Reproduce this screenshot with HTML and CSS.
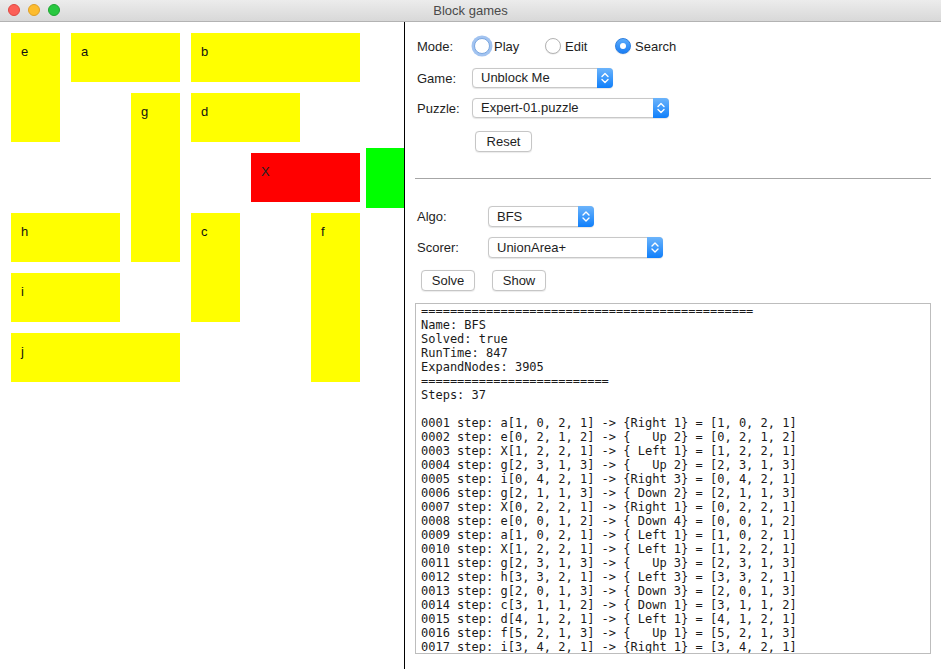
FILE: index.html
```html
<!DOCTYPE html>
<html>
<head>
<meta charset="utf-8">
<title>Block games</title>
<link rel="stylesheet" href="styles.css">
</head>
<body>
<div class="window">
  <div class="titlebar">
    <div class="lights">
      <span class="light red"></span>
      <span class="light yellow"></span>
      <span class="light green"></span>
    </div>
    <div class="title">Block games</div>
    <div></div>
  </div>
  <div class="main">
    <div class="board-pane">
      <div class="board">
        <div class="block b-e">e</div>
        <div class="block b-a">a</div>
        <div class="block b-b">b</div>
        <div class="block b-g">g</div>
        <div class="block b-d">d</div>
        <div class="block red-block b-x">X</div>
        <div class="block b-h">h</div>
        <div class="block b-c">c</div>
        <div class="block b-f">f</div>
        <div class="block b-i">i</div>
        <div class="block b-j">j</div>
      </div>
      <div class="exit"></div>
    </div>
    <div class="side">
      <div class="row mode-row">
        <span class="label lw-mode">Mode:</span>
        <span class="opt"><span class="radio focus"></span><span>Play</span></span>
        <span class="opt"><span class="radio"></span><span>Edit</span></span>
        <span class="opt"><span class="radio checked"></span><span>Search</span></span>
      </div>
      <div class="row game-row">
        <span class="label lw-game">Game:</span>
        <div class="select w-game"><span class="sel-text">Unblock Me</span><span class="sel-arrow"><svg width="16" height="20" viewBox="0 0 16 20"><path d="M5 8.5 L8 5.5 L11 8.5 M5 11.5 L8 14.5 L11 11.5" fill="none" stroke="#fff" stroke-width="1.4" stroke-linecap="round" stroke-linejoin="round"/></svg></span></div>
      </div>
      <div class="row puzzle-row">
        <span class="label lw-game">Puzzle:</span>
        <div class="select w-puzzle"><span class="sel-text">Expert-01.puzzle</span><span class="sel-arrow"><svg width="16" height="20" viewBox="0 0 16 20"><path d="M5 8.5 L8 5.5 L11 8.5 M5 11.5 L8 14.5 L11 11.5" fill="none" stroke="#fff" stroke-width="1.4" stroke-linecap="round" stroke-linejoin="round"/></svg></span></div>
      </div>
      <div class="row reset-row">
        <button class="btn w-reset">Reset</button>
      </div>
      <div class="sep"></div>
      <div class="row algo-row">
        <span class="label lw-algo">Algo:</span>
        <div class="select tall w-algo"><span class="sel-text">BFS</span><span class="sel-arrow"><svg width="16" height="21" viewBox="0 0 16 21"><path d="M5 9 L8 6 L11 9 M5 12 L8 15 L11 12" fill="none" stroke="#fff" stroke-width="1.4" stroke-linecap="round" stroke-linejoin="round"/></svg></span></div>
      </div>
      <div class="row scorer-row">
        <span class="label lw-algo">Scorer:</span>
        <div class="select tall w-scorer"><span class="sel-text">UnionArea+</span><span class="sel-arrow"><svg width="16" height="21" viewBox="0 0 16 21"><path d="M5 9 L8 6 L11 9 M5 12 L8 15 L11 12" fill="none" stroke="#fff" stroke-width="1.4" stroke-linecap="round" stroke-linejoin="round"/></svg></span></div>
      </div>
      <div class="row btn-row">
        <button class="btn w-solve">Solve</button>
        <button class="btn w-show">Show</button>
      </div>
      <div class="output"><pre>==============================================
Name: BFS
Solved: true
RunTime: 847
ExpandNodes: 3905
==========================
Steps: 37

0001 step: a[1, 0, 2, 1] -&gt; {Right 1} = [1, 0, 2, 1]
0002 step: e[0, 2, 1, 2] -&gt; {   Up 2} = [0, 2, 1, 2]
0003 step: X[1, 2, 2, 1] -&gt; { Left 1} = [1, 2, 2, 1]
0004 step: g[2, 3, 1, 3] -&gt; {   Up 2} = [2, 3, 1, 3]
0005 step: i[0, 4, 2, 1] -&gt; {Right 3} = [0, 4, 2, 1]
0006 step: g[2, 1, 1, 3] -&gt; { Down 2} = [2, 1, 1, 3]
0007 step: X[0, 2, 2, 1] -&gt; {Right 1} = [0, 2, 2, 1]
0008 step: e[0, 0, 1, 2] -&gt; { Down 4} = [0, 0, 1, 2]
0009 step: a[1, 0, 2, 1] -&gt; { Left 1} = [1, 0, 2, 1]
0010 step: X[1, 2, 2, 1] -&gt; { Left 1} = [1, 2, 2, 1]
0011 step: g[2, 3, 1, 3] -&gt; {   Up 3} = [2, 3, 1, 3]
0012 step: h[3, 3, 2, 1] -&gt; { Left 3} = [3, 3, 2, 1]
0013 step: g[2, 0, 1, 3] -&gt; { Down 3} = [2, 0, 1, 3]
0014 step: c[3, 1, 1, 2] -&gt; { Down 1} = [3, 1, 1, 2]
0015 step: d[4, 1, 2, 1] -&gt; { Left 1} = [4, 1, 2, 1]
0016 step: f[5, 2, 1, 3] -&gt; {   Up 1} = [5, 2, 1, 3]
0017 step: i[3, 4, 2, 1] -&gt; {Right 1} = [3, 4, 2, 1]</pre></div>
    </div>
  </div>
</div>
</body>
</html>
```
FILE: styles.css
```css
html, body {
  margin: 0;
  padding: 0;
  background: #fff;
}
body {
  width: 941px;
  height: 669px;
  overflow: hidden;
  font-family: "Liberation Sans", Arial, sans-serif;
  font-size: 13px;
  color: #1e1e1e;
}
.window {
  display: flex;
  flex-direction: column;
  width: 941px;
  height: 669px;
}
.titlebar {
  height: 21px;
  border-bottom: 1px solid #b3b3b3;
  background: linear-gradient(#ececec, #d8d8d8);
  display: grid;
  grid-template-columns: 1fr auto 1fr;
  align-items: center;
  flex: none;
}
.lights {
  display: flex;
  gap: 8px;
  padding-left: 8px;
  align-items: center;
  margin-top: -1px;
}
.light {
  width: 12px;
  height: 12px;
  border-radius: 50%;
  box-sizing: border-box;
}
.light.red { background: #fc5f57; border: 1px solid #df4841; }
.light.yellow { background: #fdbc2e; border: 1px solid #de9f26; }
.light.green { background: #28c840; border: 1px solid #1ea532; }
.title {
  color: #4a4a4a;
  font-size: 13px;
  line-height: 21px;
}
.main {
  display: flex;
  flex: 1;
  min-height: 0;
}
.board-pane {
  width: 405px;
  box-sizing: border-box;
  border-right: 1px solid #000;
  padding: 11px 0 0 11px;
  position: relative;
  overflow: hidden;
  flex: none;
}
.board {
  display: grid;
  grid-template-columns: repeat(6, 49px);
  grid-template-rows: repeat(6, 49px);
  gap: 11px;
}
.block {
  background: #ffff00;
  padding: 11px 0 0 10px;
  line-height: 15px;
  font-size: 13px;
  color: #111;
}
.red-block { background: #ff0000; color: #222; }
.b-e { grid-column: 1 / span 1; grid-row: 1 / span 2; }
.b-a { grid-column: 2 / span 2; grid-row: 1 / span 1; }
.b-b { grid-column: 4 / span 3; grid-row: 1 / span 1; }
.b-g { grid-column: 3 / span 1; grid-row: 2 / span 3; }
.b-d { grid-column: 4 / span 2; grid-row: 2 / span 1; }
.b-x { grid-column: 5 / span 2; grid-row: 3 / span 1; }
.b-h { grid-column: 1 / span 2; grid-row: 4 / span 1; }
.b-c { grid-column: 4 / span 1; grid-row: 4 / span 2; }
.b-f { grid-column: 6 / span 1; grid-row: 4 / span 3; }
.b-i { grid-column: 1 / span 2; grid-row: 5 / span 1; }
.b-j { grid-column: 1 / span 3; grid-row: 6 / span 1; }
.exit {
  position: absolute;
  left: 366px;
  top: 126px;
  width: 60px;
  height: 60px;
  background: #00ff00;
}
.side {
  flex: 1;
  padding: 14px 10px 0 10px;
  display: flex;
  flex-direction: column;
  min-width: 0;
}
.row {
  display: flex;
  align-items: center;
  padding-left: 2px;
  flex: none;
}
.label { flex: none; }
.lw-mode { width: 57px; }
.lw-game { width: 55px; }
.lw-algo { width: 71px; }
.mode-row { height: 20px; }
.game-row { margin-top: 12px; }
.puzzle-row { margin-top: 10px; }
.reset-row { margin-top: 13px; padding-left: 60px; }
.algo-row { margin-top: 27px; }
.scorer-row { margin-top: 10px; }
.btn-row { margin-top: 12px; padding-left: 6px; gap: 17px; }
.opt {
  display: flex;
  align-items: center;
  width: 71px;
  flex: none;
}
.opt:nth-child(3) { width: 70px; }
.radio {
  width: 16px;
  height: 16px;
  border-radius: 50%;
  box-sizing: border-box;
  border: 1px solid #b4b4b4;
  background: #fff;
  margin-right: 4px;
  flex: none;
  position: relative;
  box-shadow: 0 0.5px 1px rgba(0,0,0,0.12);
}
.radio.focus {
  border-color: #7aa7e0;
  box-shadow: 0 0 0 2.5px rgba(100, 155, 230, 0.6);
}
.radio.checked {
  background: linear-gradient(#5aabfb, #1a7ef5);
  border-color: #2d7fe0;
}
.radio.checked::after {
  content: "";
  position: absolute;
  left: 4px;
  top: 4px;
  width: 6px;
  height: 6px;
  border-radius: 50%;
  background: #fff;
}
.select {
  display: flex;
  height: 20px;
  box-sizing: border-box;
  border: 1px solid #c8c8c8;
  border-radius: 4px;
  background: #fff;
  box-shadow: 0 0.5px 1px rgba(0,0,0,0.1);
  flex: none;
}
.select.tall { height: 21px; }
.sel-text {
  flex: 1;
  padding-left: 8px;
  line-height: 18px;
  white-space: nowrap;
  overflow: hidden;
}
.select.tall .sel-text { line-height: 19px; }
.sel-arrow {
  width: 16px;
  margin: -1px -1px -1px 0;
  border-radius: 0 4px 4px 0;
  background: linear-gradient(#6cb4fb, #0f7ffb);
  display: flex;
  align-items: center;
  justify-content: center;
}
.sel-arrow svg { display: block; }
.w-game { width: 141px; }
.w-puzzle { width: 197px; }
.w-algo { width: 106px; }
.w-scorer { width: 175px; }
.btn {
  height: 21px;
  box-sizing: border-box;
  border: 1px solid #c6c6c6;
  border-radius: 4px;
  background: #fff;
  font-family: "Liberation Sans", Arial, sans-serif;
  font-size: 13px;
  color: #1e1e1e;
  padding: 0;
  line-height: 19px;
  text-align: center;
  box-shadow: 0 0.5px 1px rgba(0,0,0,0.08);
  flex: none;
}
.w-reset { width: 57px; }
.w-solve { width: 54px; }
.w-show { width: 54px; }
.sep {
  margin-top: 26px;
  height: 1px;
  background: #a6a6a6;
  flex: none;
}
.output {
  margin-top: 12px;
  height: 351px;
  box-sizing: border-box;
  border: 1px solid #bdbdbd;
  padding: 0 5px;
  overflow: hidden;
  flex: none;
  background: #fff;
}
.output pre {
  margin: 0;
  font-family: "DejaVu Sans Mono", monospace;
  font-size: 12px;
  line-height: 14px;
  color: #1a1a1a;
}
```
